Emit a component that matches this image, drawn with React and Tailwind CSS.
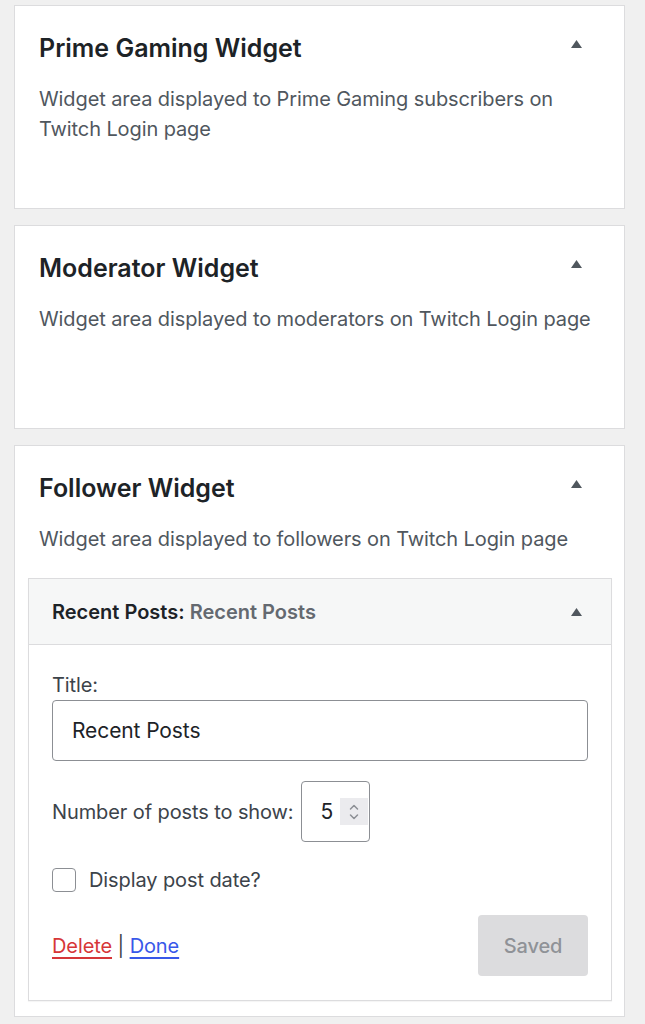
import React from 'react';

const font = { fontFamily: 'Inter, "Noto Sans", sans-serif' };

const Arrow = () => (
  <svg width="13" height="10" viewBox="0 0 13 10" className="shrink-0">
    <path d="M6.5 1 L12 9 L1 9 Z" fill="#50575e" />
  </svg>
);

const SidebarCard = ({ title, description, children }) => (
  <div className="bg-white border border-[#dcdcde] min-h-[204px] pb-[15px]">
    <div className="flex items-center justify-between pl-[24px] pr-[41px] pt-[27px]">
      <h2 className="text-[25px] leading-[30px] font-semibold text-[#1d2327]">{title}</h2>
      <div className="-mt-[8px]">
        <Arrow />
      </div>
    </div>
    <p className="pl-[24px] pr-[16px] mt-[21px] text-[20px] leading-[30px] text-[#50575e] tracking-[-0.1px]">
      {description}
    </p>
    {children}
  </div>
);

const NumberInput = () => (
  <div className="flex items-center h-[61px] w-[69px] border border-[#8c8f94] rounded-[4px] bg-white pl-[19px] pr-[1px]">
    <span className="text-[21px] text-[#1d2327] flex-1">5</span>
    <div className="flex items-center justify-center w-[28px] h-[27px] bg-[#ebebee]">
      <svg width="12" height="20" viewBox="0 0 12 20">
        <path d="M2.5 7 L6 3.5 L9.5 7" fill="none" stroke="#8c8f94" strokeWidth="1.5" strokeLinecap="round" strokeLinejoin="round" />
        <path d="M2.5 13 L6 16.5 L9.5 13" fill="none" stroke="#8c8f94" strokeWidth="1.5" strokeLinecap="round" strokeLinejoin="round" />
      </svg>
    </div>
  </div>
);

const RecentPostsWidget = () => (
  <div className="ml-[13px] mr-[12px] mt-[24px] border border-[#dcdcde] shadow-[0_1px_1px_rgba(0,0,0,0.04)]">
    <div className="flex items-center justify-between h-[66px] bg-[#f6f7f7] border-b border-[#dcdcde] pl-[23px] pr-[28px]">
      <div className="text-[20px] font-semibold">
        <span className="text-[#1d2327]">Recent Posts:</span>
        <span className="text-[#646970]"> Recent Posts</span>
      </div>
      <Arrow />
    </div>
    <div className="px-[23px] pt-[26px] pb-[24px] text-[20px] text-[#3c434a] tracking-[-0.1px]">
      <label className="block leading-[28px]">Title:</label>
      <div className="mt-[1px] h-[61px] border border-[#8c8f94] rounded-[4px] flex items-center px-[19px] text-[21px] text-[#1d2327]">
        Recent Posts
      </div>
      <div className="flex items-center gap-[7px] mt-[20px]">
        <span>Number of posts to show:</span>
        <NumberInput />
      </div>
      <label className="flex items-center gap-[13px] mt-[24px] leading-[28px]">
        <span className="w-[24px] h-[24px] border border-[#8c8f94] rounded-[4px] bg-white" />
        <span>Display post date?</span>
      </label>
      <div className="flex items-center justify-between mt-[21px]">
        <div className="leading-[28px]">
          <a className="text-[#d63638] underline underline-offset-[4px]">Delete</a>
          <span className="text-[#3c434a]"> | </span>
          <a className="text-[#3858e9] underline underline-offset-[4px]">Done</a>
        </div>
        <button className="w-[110px] h-[61px] rounded-[4px] bg-[#dcdcde] text-[#8f9297] text-[20px] font-medium">
          Saved
        </button>
      </div>
    </div>
  </div>
);

export default function App() {
  return (
    <div className="min-h-screen bg-[#f0f0f0] pl-[14px] pr-[20px] pt-[5px] pb-[8px] flex flex-col gap-[16px]" style={font}>
      <SidebarCard
        title="Prime Gaming Widget"
        description="Widget area displayed to Prime Gaming subscribers on Twitch Login page"
      />
      <SidebarCard
        title="Moderator Widget"
        description="Widget area displayed to moderators on Twitch Login page"
      />
      <SidebarCard
        title="Follower Widget"
        description="Widget area displayed to followers on Twitch Login page"
      >
        <RecentPostsWidget />
      </SidebarCard>
    </div>
  );
}
